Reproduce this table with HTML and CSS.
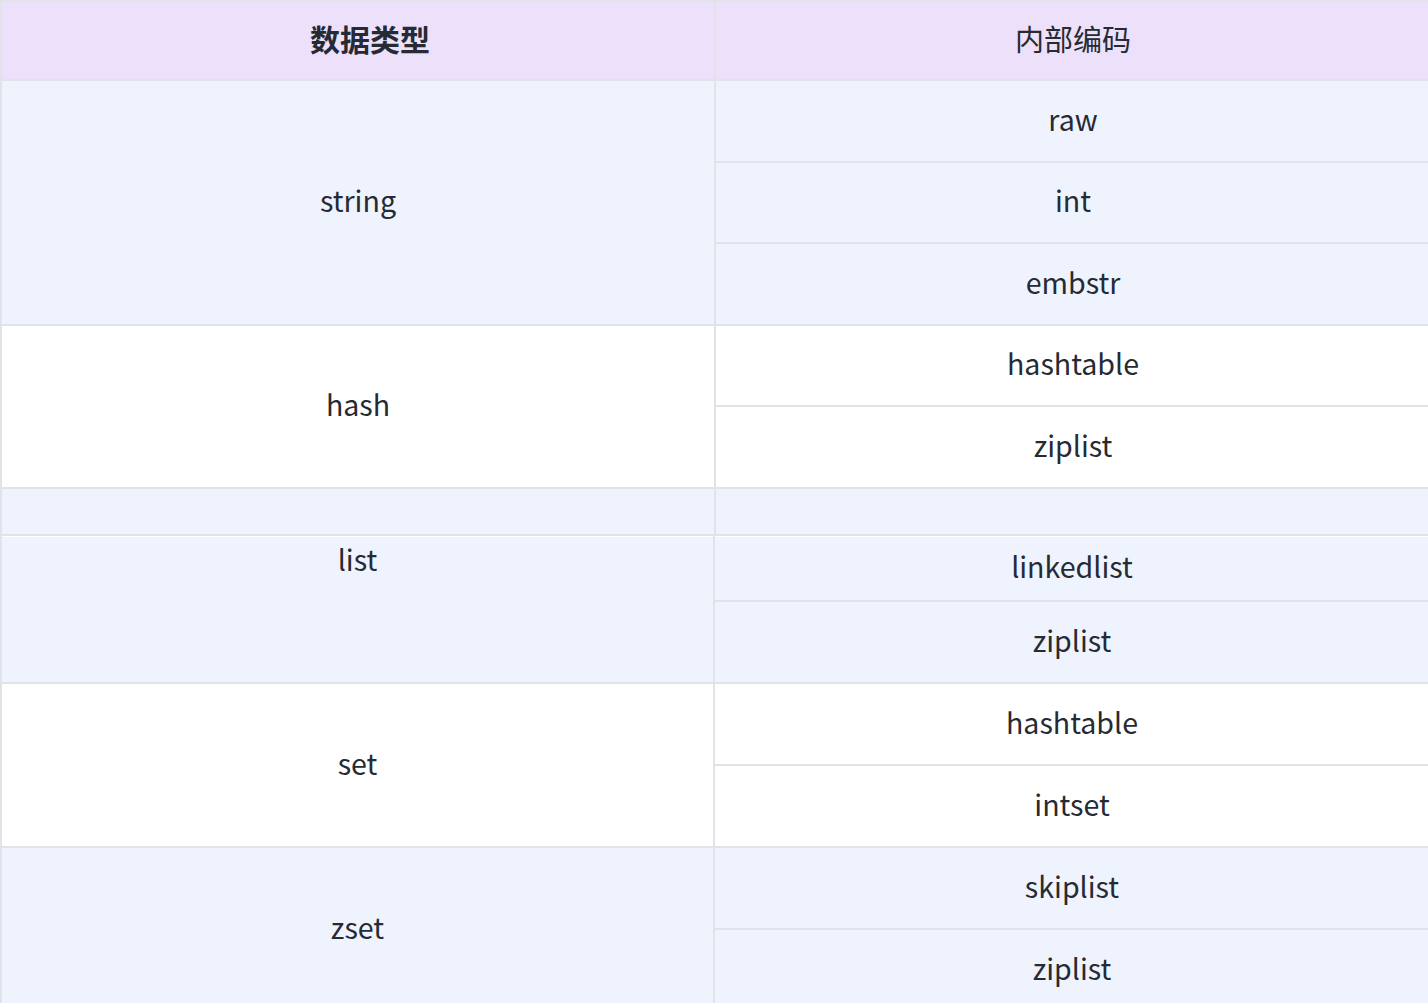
FILE: index.html
```html
<!DOCTYPE html>
<html lang="zh">
<head>
<meta charset="utf-8">
<title>数据类型与内部编码</title>
<link rel="stylesheet" href="styles.css">
</head>
<body>
<table class="tbl">
  <colgroup><col class="c1"><col class="c2"></colgroup>
  <thead>
    <tr class="head"><th class="th-bold">数据类型</th><th>内部编码</th></tr>
  </thead>
  <tbody>
    <tr class="r blue"><td rowspan="3">string</td><td>raw</td></tr>
    <tr class="r blue"><td>int</td></tr>
    <tr class="r blue"><td>embstr</td></tr>
    <tr class="r white"><td rowspan="2">hash</td><td>hashtable</td></tr>
    <tr class="r white"><td>ziplist</td></tr>
    <tr class="spacer blue"><td></td><td></td></tr>
  </tbody>
</table>
<table class="tbl tbl2">
  <colgroup><col class="c1b"><col class="c2"></colgroup>
  <tbody>
    <tr class="r short blue"><td rowspan="2" class="top">list</td><td>linkedlist</td></tr>
    <tr class="r blue"><td>ziplist</td></tr>
    <tr class="r white"><td rowspan="2">set</td><td>hashtable</td></tr>
    <tr class="r white"><td>intset</td></tr>
    <tr class="r blue"><td rowspan="2">zset</td><td>skiplist</td></tr>
    <tr class="r blue"><td>ziplist</td></tr>
  </tbody>
</table>
</body>
</html>
```
FILE: styles.css
```css
html, body {
  margin: 0;
  padding: 0;
  background: #ffffff;
}
body {
  font-family: "Noto Sans CJK SC", "Noto Sans", sans-serif;
  font-size: 28.6px;
  color: #262a33;
  overflow: hidden;
}
.tbl {
  width: 1430px;
  border-collapse: collapse;
  table-layout: fixed;
}
.c1 { width: 714px; }
.c1b { width: 713px; }
.c2 { width: 716px; }
.tbl th, .tbl td {
  border: 2px solid #e1e3e9;
  padding: 0 0 4px 0;
  text-align: center;
  vertical-align: middle;
  line-height: 40px;
}
.head th {
  background: #ece0fb;
  height: 71px;
  font-weight: 400;
  font-size: 29px;
  padding-bottom: 6px;
}
.head .th-bold {
  font-weight: 700;
  font-size: 30px;
  padding-left: 24px;
}
.r td { height: 75.5px; }
.blue td { background: #eef3fe; }
.white td { background: #ffffff; }
.spacer td { height: 41px; }
.tbl2 .r td { height: 76px; }
.tbl2 tr:first-child td { border-top-color: #ffffff; border-top-width: 1px; }
.tbl2 .r.short td { height: 59px; }
.tbl2 td.top {
  vertical-align: top;
  padding-top: 2px;
}
```
